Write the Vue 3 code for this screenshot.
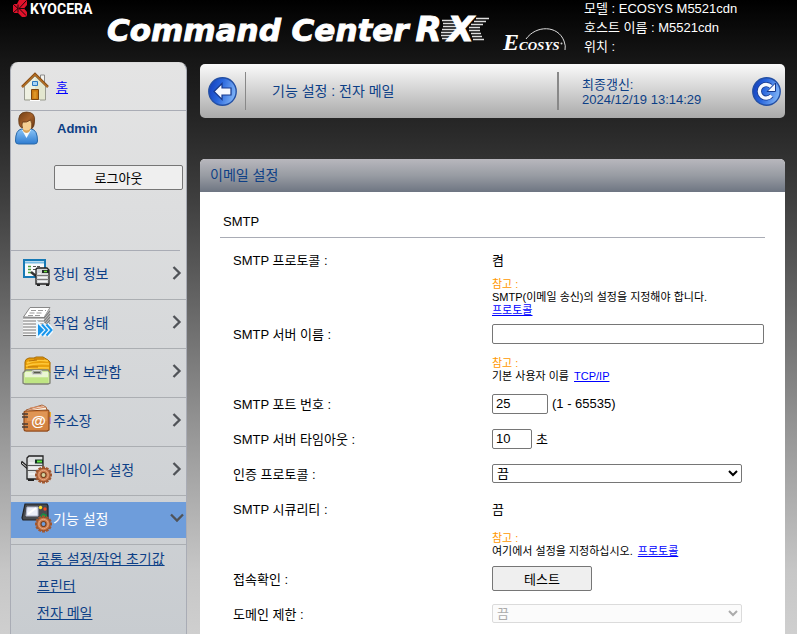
<script setup>
import { ref } from 'vue'

const serverName = ref('')
const port = ref('25')
const timeout = ref('10')
const auth = ref('off')
const domain = ref('off')

const menu = [
  { id: 'device-info', label: '장비 정보' },
  { id: 'job-status', label: '작업 상태' },
  { id: 'document-box', label: '문서 보관함' },
  { id: 'address-book', label: '주소장' },
  { id: 'device-settings', label: '디바이스 설정' },
  { id: 'function-settings', label: '기능 설정', active: true },
]
const submenu = ['공통 설정/작업 초기값', '프린터', '전자 메일']
const gearTeeth = [0, 30, 60, 90, 120, 150, 180, 210, 240, 270, 300, 330]
</script>

<template>
  <div class="page">
    <header class="top">
      <div class="kyocera">
        <svg class="kyocera-mark" width="15" height="18" viewBox="0 0 15 18" aria-hidden="true">
          <path d="M6 0h7l1 1v4l-3 3.500 3 3.500v4l-2 1H9l-4-4H0V4h4z" fill="#e0122b" />
          <path d="M0 4l5 4.500L0 13M5 4.500v8M13 1L6 8.500l7 7M6 8.500h5" fill="none" stroke="#240509" stroke-width="1" />
        </svg>
        <span>KYOCERA</span>
      </div>
      <div class="product">
        <span class="product-name">Command Center</span>
        <span class="rx">
          <svg class="rx-lines" width="74" height="26" viewBox="0 0 74 26" aria-hidden="true">
            <path d="M26 4.500h13M27 7.500h12M27 10.500h14M26 13.500h14M25 16.500h14M25 19.500h12M26 22.500h9" stroke="#ddd" stroke-width="1.300" />
            <path d="M60 2.500h13M58 5.500h12M55 8.500h12M53 11.500h11M53 14.500h11M55 17.500h10M56 20.500h10M57 23.500h11" stroke="#ddd" stroke-width="1.300" />
          </svg>
          <span>R</span><span>X</span>
        </span>
      </div>
      <div class="ecosys">
        <svg class="ecosys-arc" width="64" height="26" viewBox="0 0 64 26" aria-hidden="true">
          <path d="M23 11C33-3 55-3 61 13q2 5 1 9" fill="none" stroke="#ddd" stroke-width="1" />
          <circle cx="58.500" cy="15.500" r="1" fill="#ccc" />
        </svg>
        <span class="ecosys-name"><b>E</b>cosys</span>
      </div>
      <div class="info">
        <div>모델 : ECOSYS M5521cdn</div>
        <div>호스트 이름 : M5521cdn</div>
        <div>위치 :</div>
      </div>
    </header>

    <div class="columns">
      <aside class="sidebar">
        <div class="home">
          <svg width="28" height="30" viewBox="0 0 28 30" aria-hidden="true">
            <path d="M19.500 3h4v8l-4-4z" fill="#f4f4f0" stroke="#8a8a8a" />
            <path d="M3.500 14L14 4l10.500 10v14h-21z" fill="#e3e7cf" stroke="#999b90" />
            <path d="M14 5v22H4V14z" fill="#f5f6ec" opacity=".6" />
            <path d="M1 15L14 2l13 13" fill="none" stroke="#8b4d12" stroke-width="2.500" />
            <path d="M1.500 15L14 2.500 26.500 15" fill="none" stroke="#d18a31" stroke-width="1" />
            <path d="M11.500 9.500h5v4h-5z" fill="#a8d5f5" stroke="#2d79c1" />
            <path d="M10.500 17.500h7v10h-7z" fill="#cc7a10" stroke="#7c4510" />
            <path d="M12.500 19.500h3v7h-3z" fill="#dd9628" />
            <path d="M9 28.500h10" stroke="#fff" />
          </svg>
          <a href="#home">홈</a>
        </div>

        <div class="account">
          <div class="user">
            <svg width="26" height="34" viewBox="0 0 26 34" aria-hidden="true">
              <defs>
                <linearGradient id="shirt" x2="0" y2="1"><stop stop-color="#8cc6f8" /><stop offset="1" stop-color="#2d7bd0" /></linearGradient>
                <linearGradient id="hair" x2="1" y2="1"><stop stop-color="#6e3d14" /><stop offset=".5" stop-color="#a4602a" /><stop offset="1" stop-color="#66350f" /></linearGradient>
              </defs>
              <path d="M2.500 30q0-11 6-12h10q6 1 6 12 0 3-3 3h-16q-3 0-3-3z" fill="url(#shirt)" stroke="#2868a8" />
              <path d="M9 19l4.500 8 4.500-8z" fill="#f4fbff" />
              <path d="M10 15h7v5q-3.500 4-7 0z" fill="#d9a45a" />
              <ellipse cx="13.500" cy="12" rx="6" ry="7.500" fill="#f5cf92" />
              <path d="M6 13Q4 1 13.500 1T21.500 11q0 5-3 7 1-6-1-9-4 3-8 2-1 3 0 6-3-1-3.500-4z" fill="url(#hair)" stroke="#5c3211" stroke-width=".7" />
            </svg>
            <strong>Admin</strong>
          </div>
          <button type="button" class="logout">로그아웃</button>
        </div>
        <div class="divider"></div>

        <nav>
          <a v-for="item in menu" :key="item.id" :href="'#' + item.id" class="item" :class="{ active: item.active }">
            <span class="item-body">
              <svg class="icon" width="32" height="32" viewBox="0 0 32 32" aria-hidden="true">
                <g v-if="item.id === 'device-info'">
                  <path d="M3 3h21v17H3z" fill="#f8fafb" stroke="#1679b5" stroke-width="2" />
                  <path d="M4 5.500h19" stroke="#79bce3" stroke-width="2" />
                  <path d="M7 9.500h3M7 12.500h3M7 15.500h3" stroke="#4aa03c" stroke-width="1.500" />
                  <path d="M12 9.500h8M12 12.500h5" stroke="#555" stroke-dasharray="3 1" />
                  <path d="M10 15l5 4" stroke="#333" stroke-width="2.500" />
                  <path d="M15 13q0-2 2-2h9l2 2v14H15z" fill="#d5d7d9" stroke="#222" stroke-width="1.300" />
                  <path d="M21 13h7v3h-7z" fill="#202b27" /><path d="M23 14.500h3" stroke="#73e040" stroke-width="1.500" />
                  <path d="M15 18.500h13M15 22.500h13" stroke="#777" /><path d="M17 16.500h3M17 20.500h9M17 24.500h9" stroke="#f4f4f4" />
                  <path d="M16 28h3M25 28h3" stroke="#222" stroke-width="2" />
                </g>
                <g v-else-if="item.id === 'job-status'">
                  <path d="M2.500 11L9 1.500h20l-6 10z" fill="#fff" stroke="#888" />
                  <path d="M23 11l6-9v19l-6 7z" fill="#bbb" />
                  <path d="M10 4.500h15M8.500 7h14M7 9.500h13" stroke="#999" stroke-dasharray="5 2" />
                  <path d="M2 12h21v17H2z" fill="#f8f8f8" />
                  <path d="M2 12h21l6-7M2 15h21l6-7M2 18h21l6-7M2 21h21l6-7M2 24h21l6-7M2 27h21l6-7M2 29.500h18" fill="none" stroke="#777" stroke-width="1.100" />
                  <path d="M17 18v12l6-6zM22 18l5.500 6-5.500 6M26 18l5 6-5 6" fill="none" stroke="#eaf7ff" stroke-width="4" />
                  <path d="M17 18v12l6-6z" fill="#1795ec" />
                  <path d="M21 18.500l5 5.500-5 5.500M25.500 18.500l5 5.500-5 5.500" fill="none" stroke="#1795ec" stroke-width="2" />
                </g>
                <g v-else-if="item.id === 'document-box'">
                  <path d="M4 18V7q0-3 4-4h5l2-1h7l5 3q3 2 2 5v8z" fill="#e9a00a" stroke="#a76b04" />
                  <path d="M6 8q8-4 21-2M5 11q8-3 23-2M5 14q8-2 23-1" stroke="#ffc93b" stroke-width="1.500" fill="none" />
                  <path d="M8 6l8-1M13 4h10M7 12h10" stroke="#bb7105" fill="none" />
                  <path d="M5 15h22l2 3v10l-2 1H4l-2-1V18z" fill="#cce89a" stroke="#7e8174" stroke-width="1.300" />
                  <path d="M4 17h23v5H4z" fill="#eaf6d3" /><path d="M4 23h23v5H4z" fill="#bfe583" />
                  <rect x="11" y="15.500" width="10" height="4" rx="1.500" fill="#9b9f91" stroke="#ddd" /><path d="M13 17.500h6" stroke="#56594f" />
                </g>
                <g v-else-if="item.id === 'address-book'">
                  <path d="M5 6l16-5 4 2 2 6v18H5z" fill="#faf2e4" stroke="#a16139" />
                  <path d="M8 6l17-3M9 4l13-2" stroke="#d98d64" />
                  <path d="M27 8h3v5h-3z" fill="#eead2e" /><path d="M27 13h3v7h-3z" fill="#c193d1" />
                  <path d="M5 7l22-1q1 0 1 2v18l-2 1H5q-2 0-2-2V9q0-2 2-2z" fill="#d48342" stroke="#8d481a" stroke-width="1.200" />
                  <path d="M6 8h20v9H6z" fill="#e6a163" opacity=".6" />
                  <path d="M1 10h6M1 13h6M1 20h6M1 23h6" stroke="#493c35" stroke-width="1.500" />
                  <text x="17.500" y="21.500" class="at">@</text>
                </g>
                <g v-else-if="item.id === 'device-settings'">
                  <path d="M0 9l7 6" stroke="#222" stroke-width="3" /><path d="M1 10l6 5" stroke="#ddd" stroke-width="1" />
                  <path d="M6 5l2-2h14v23H6z" fill="#dddfe0" stroke="#222" stroke-width="1.300" />
                  <path d="M14 6.500h8v4h-8z" fill="#123021" /><path d="M16 8.500h5" stroke="#62e742" stroke-width="2" />
                  <path d="M6 12.500h16M6 17.500h16" stroke="#555" /><path d="M8 10h5M8 15h12M8 21h6" stroke="#fff" />
                  <path d="M7 27h6" stroke="#222" stroke-width="2" />
                </g>
                <g v-else>
                  <path d="M4 2h22l1 2v13l-2 1H2L1 16z" fill="#484b50" stroke="#202226" stroke-width="1.200" />
                  <path d="M6 5h11v9H5z" fill="#eceff9" stroke="#b1b6ca" /><path d="M7 12l8-6" stroke="#fff" stroke-width="2" />
                  <circle cx="19.500" cy="5.500" r="1.700" fill="#ffe22c" /><circle cx="24" cy="7" r="1.700" fill="#f34822" />
                  <path d="M19 14l3-3 4 2v4h-7z" fill="#168e45" />
                </g>
                <g v-if="item.id.endsWith('settings')" transform="translate(22.500 22)">
                  <rect v-for="angle in gearTeeth" :key="angle" x="-1.500" y="-8.500" width="3" height="4" fill="#a4582f" :transform="`rotate(${angle})`" />
                  <circle r="6.700" fill="#cc7b4d" stroke="#95502c" />
                  <circle r="4.700" fill="none" stroke="#e5a780" />
                  <circle r="2.500" :fill="item.active ? '#6e9ddb' : '#d3d09b'" stroke="#77401f" stroke-width="1.200" />
                </g>
              </svg>
              <span class="item-label">{{ item.label }}</span>
              <svg class="chevron" :class="{ open: item.active }" width="14" height="14" viewBox="0 0 14 14" aria-hidden="true">
                <path d="M3.500 1l6 6-6 6" fill="none" stroke="#505358" stroke-width="2.300" />
              </svg>
            </span>
          </a>
        </nav>
        <ul class="submenu">
          <li v-for="label in submenu" :key="label"><a href="#function-settings">{{ label }}</a></li>
        </ul>
      </aside>

      <main>
        <div class="toolbar">
          <button type="button" class="round" aria-label="뒤로">
            <svg width="29" height="29" viewBox="0 0 29 29">
              <defs>
                <linearGradient id="orb" x1="0" y1=".3" x2="1" y2=".6"><stop stop-color="#1540bd" /><stop offset=".4" stop-color="#2865dc" /><stop offset="1" stop-color="#83b7f8" /></linearGradient>
              </defs>
              <circle cx="14.500" cy="14.500" r="13.700" fill="url(#orb)" stroke="#2450a4" stroke-width="1.400" />
              <path d="M6 14.500L14 6.500v4.500h9v7h-9v4.500z" fill="#f6f9ff" stroke="#17398d" stroke-width="1.200" />
            </svg>
          </button>
          <div class="path">기능 설정 : 전자 메일</div>
          <div class="updated">최종갱신:<br>2024/12/19 13:14:29</div>
          <button type="button" class="round" aria-label="새로 고침">
            <svg width="29" height="29" viewBox="0 0 29 29">
              <circle cx="14.500" cy="14.500" r="13.700" fill="url(#orb)" stroke="#2450a4" stroke-width="1.400" />
              <path d="M19.500 18.500A6.800 6.800 0 1 1 18.500 9" fill="none" stroke="#17398d" stroke-width="5" />
              <path d="M23.500 6v8.500h-8.500z" fill="#f6f9ff" stroke="#17398d" />
              <path d="M19.500 18.500A6.800 6.800 0 1 1 19 9.500" fill="none" stroke="#f6f9ff" stroke-width="3.400" />
            </svg>
          </button>
        </div>

        <section class="panel">
          <h1>이메일 설정</h1>
          <form @submit.prevent>
            <h2>SMTP</h2>
            <div class="row"><span class="label">SMTP 프로토콜 :</span><span>켬</span></div>
            <p class="note flush"><em>참고 :</em><br>SMTP(이메일 송신)의 설정을 지정해야 합니다.<br><a href="#protocol">프로토콜</a></p>
            <div class="row">
              <label class="label" for="server">SMTP 서버 이름 :</label>
              <input id="server" v-model="serverName" class="wide" type="text">
            </div>
            <p class="note"><em>참고 :</em><br>기본 사용자 이름 <a class="inline-link" href="#tcpip">TCP/IP</a></p>
            <div class="row">
              <label class="label" for="port">SMTP 포트 번호 :</label>
              <span class="value"><input id="port" v-model="port" class="port" type="text">(1 - 65535)</span>
            </div>
            <div class="row">
              <label class="label" for="timeout">SMTP 서버 타임아웃 :</label>
              <span class="value"><input id="timeout" v-model="timeout" class="timeout" type="text">초</span>
            </div>
            <div class="row">
              <label class="label" for="auth">인증 프로토콜 :</label>
              <select id="auth" v-model="auth"><option value="off">끔</option><option value="on">켬</option></select>
            </div>
            <div class="row"><span class="label">SMTP 시큐리티 :</span><span>끔</span></div>
            <p class="note"><em>참고 :</em><br>여기에서 설정을 지정하십시오. <a class="inline-link" href="#protocol">프로토콜</a></p>
            <div class="row">
              <label class="label" for="test">접속확인 :</label>
              <button id="test" type="button" class="test">테스트</button>
            </div>
            <div class="row">
              <label class="label" for="domain">도메인 제한 :</label>
              <select id="domain" v-model="domain" disabled><option value="off">끔</option></select>
            </div>
          </form>
        </section>
      </main>
    </div>
  </div>
</template>

<style>
body {
  background: #ccc;
}
</style>

<style scoped>
.page {
  box-sizing: border-box;
  display: flex;
  flex-direction: column;
  min-height: 100vh;
  padding: 0 12px 0 10px;
  font-family: "Liberation Sans", "Noto Sans CJK KR", sans-serif;
  font-size: 13px;
  color: #000;
  background: linear-gradient(#000 0, #161616 60px, #252525 118px, #3f3f3f 200px, #555 260px, #999 440px, #c6c6c6 570px, #cfcfcf 634px);
}
.page *, .page *::before {
  box-sizing: border-box;
}
button, input, select {
  font: inherit;
  color: inherit;
}
.top {
  display: grid;
  grid-template-columns: 97px 396px 81px 1fr;
  height: 62px;
  color: #fff;
}
.kyocera {
  display: flex;
  gap: 2px;
  padding-left: 3px;
  font: 700 14px/18px Roboto, sans-serif;
}
.kyocera-mark {
  flex: none;
}
.product {
  display: flex;
  align-items: baseline;
  gap: 7px;
  padding-top: 9px;
  font: italic 700 31px/40px "DejaVu Sans", sans-serif;
  white-space: nowrap;
  -webkit-text-stroke: 1px #fff;
}
.rx {
  position: relative;
  z-index: 0;
  display: flex;
  gap: 6px;
  font-size: 34px;
}
.rx-lines {
  position: absolute;
  z-index: -1;
  left: 0;
  top: 7px;
}
.ecosys {
  position: relative;
  padding-top: 30px;
  font: italic 700 19px/24px "Liberation Serif", serif;
  font-variant: small-caps;
}
.ecosys-name b {
  font-size: 24px;
}
.ecosys-arc {
  position: absolute;
  left: 0;
  top: 28px;
}
.info {
  line-height: 19px;
}
.info div:first-child {
  margin-top: -1px;
}
.columns {
  display: grid;
  flex: 1;
  grid-template-columns: 177px 1fr;
  gap: 13px;
}
.sidebar {
  border: 1px solid #a9acb5;
  border-top-color: #ddd;
  border-bottom: 0;
  border-radius: 8px 8px 0 0;
  background: linear-gradient(#e4e4e4, #c8ccd0);
}
.home {
  display: flex;
  align-items: center;
  gap: 7px;
  height: 48px;
  padding-left: 10px;
  border-bottom: 1px solid #a9acb5;
}
.home a {
  color: #00f;
}
.account {
  height: 139px;
}
.user {
  display: flex;
  gap: 18px;
  height: 54px;
  padding-left: 2px;
  line-height: 35px;
  color: #0d3f86;
}
.logout {
  display: block;
  width: 129px;
  height: 25px;
  margin-left: 43px;
  padding: 0;
  border: 1px solid #767676;
  border-radius: 2px;
  background: #efefef;
}
.divider {
  height: 1px;
  margin-right: 6px;
  background: #a9acb5;
}
.item {
  display: block;
  height: 49px;
  border-bottom: 1px solid #abaeb2;
  font-size: 14px;
  color: #0d3f86;
  text-decoration: none;
}
.item-body {
  display: flex;
  align-items: center;
  height: 44px;
  padding: 0 2px 0 10px;
}
.item-label {
  flex: 1;
}
.item.active {
  padding-top: 6px;
  color: #fff;
}
.item.active .item-body {
  height: 36px;
  padding-bottom: 4px;
  background: #6e9ddb;
}
.chevron.open {
  transform: rotate(90deg);
}
.at {
  font: 700 15px "Liberation Sans", sans-serif;
  fill: #fff;
  text-anchor: middle;
}
.submenu {
  margin: 0;
  padding: 1px 0 0 26px;
  list-style: none;
  font-size: 14px;
  line-height: 27px;
}
.submenu a {
  color: #0d3f86;
}
main {
  display: flex;
  flex-direction: column;
  min-width: 0;
}
.toolbar {
  display: flex;
  align-items: center;
  height: 54px;
  margin: 2px 0 41px;
  padding: 0 4px 0 8px;
  border-radius: 5px;
  color: #0d3f86;
  background: linear-gradient(#fafafa, #a9a9a9);
}
.round {
  display: flex;
  flex: none;
  padding: 0;
  border: 0;
  border-radius: 50%;
  background: none;
}
.path {
  flex: 1;
  margin-left: 8px;
  padding-left: 26px;
  border-left: 1px solid #888;
  font-size: 14px;
  line-height: 38px;
}
.updated {
  width: 195px;
  height: 38px;
  padding: 5px 0 0 23px;
  border-left: 2px solid #888;
  line-height: 15px;
}
.panel {
  flex: 1;
  border-radius: 5px 5px 0 0;
  overflow: hidden;
  background: #fff;
}
h1 {
  margin: 0;
  padding-left: 10px;
  font-size: 14px;
  font-weight: 400;
  line-height: 33px;
  color: #0d3f86;
  background: linear-gradient(#b8b7bd, #989ca3 50%, #6e7582);
}
form {
  padding: 16px 20px 3px;
}
h2 {
  margin: 0 0 4px;
  padding: 1px 3px 2px;
  border-bottom: 1px solid #a9acb5;
  font-size: 13px;
  font-weight: 400;
  line-height: 26px;
}
.row {
  display: grid;
  grid-template-columns: 259px 1fr;
  align-items: center;
  height: 35px;
  padding-left: 13px;
}
.value {
  display: flex;
  align-items: center;
  gap: 4px;
}
.note {
  margin: 0;
  padding: 6px 0 3px 272px;
  font-size: 11px;
  line-height: 13px;
}
.note.flush {
  margin-bottom: -1px;
  padding-top: 1px;
  padding-bottom: 0;
}
.note em {
  font-style: normal;
  color: #ff9800;
}
.note a {
  color: #00f;
}
.inline-link {
  margin-left: 2px;
}
input {
  height: 20px;
  padding: 0 3px;
  border: 1px solid #767676;
  border-radius: 2px;
  background: #fff;
}
.wide {
  width: 100%;
  max-width: 272px;
}
.port {
  width: 56px;
}
.timeout {
  width: 40px;
}
select {
  width: 250px;
  height: 19px;
  padding: 0;
  border: 1px solid #767676;
  border-radius: 2px;
  background-color: #fff;
}
select:disabled {
  border-color: #ccc;
  color: #888;
  background-color: #fafafa;
}
.test {
  width: 100px;
  height: 25px;
  padding: 0;
  border: 1px solid #767676;
  border-radius: 2px;
  background: #efefef;
}
</style>
